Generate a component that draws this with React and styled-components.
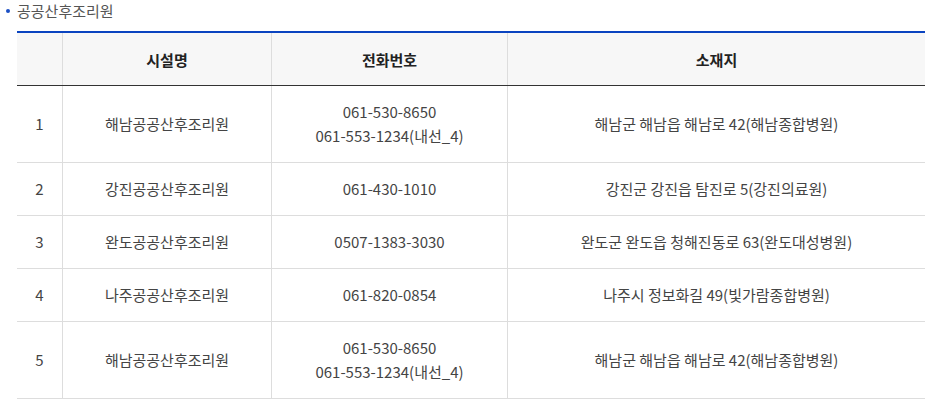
import React from 'react';
import styled, { createGlobalStyle } from 'styled-components';

const GlobalStyle = createGlobalStyle`
  body {
    margin: 0;
    background: #fff;
    font-family: "Noto Sans CJK KR", "Noto Sans", sans-serif;
    color: #333;
  }
`

const Wrapper = styled.div`
  padding: 0 9px 0 17px;
`

const Title = styled.h4`
  position: relative;
  margin: 0 0 9px;
  font-size: 15px;
  font-weight: 400;
  line-height: 22px;
  color: #555;
  &::before {
    content: '';
    position: absolute;
    left: -11px;
    top: 9px;
    width: 4px;
    height: 4px;
    border-radius: 50%;
    background: #1a4fc4;
  }
`

const Table = styled.table`
  width: 100%;
  table-layout: fixed;
  border-collapse: collapse;
  border-top: 2px solid #0a44c0;
  font-size: 15px;
  text-align: center;
`

const HeadCell = styled.th`
  height: 52px;
  padding: 0;
  background: #f7f7f7;
  font-size: 15px;
  font-weight: 700;
  color: #222;
  border-bottom: 1px solid #333;
  border-left: ${props => props.first ? 'none' : '1px solid #ddd'};
  width: ${props => props.w || 'auto'};
`

const Cell = styled.td`
  padding: 14px 4px;
  line-height: 24px;
  color: #444;
  border-bottom: 1px solid #ddd;
  border-left: ${props => props.first ? 'none' : '1px solid #ddd'};
`

const rows = [
  { no: 1, name: '해남공공산후조리원', tel: ['061-530-8650', '061-553-1234(내선_4)'], addr: '해남군 해남읍 해남로 42(해남종합병원)' },
  { no: 2, name: '강진공공산후조리원', tel: ['061-430-1010'], addr: '강진군 강진읍 탐진로 5(강진의료원)' },
  { no: 3, name: '완도공공산후조리원', tel: ['0507-1383-3030'], addr: '완도군 완도읍 청해진동로 63(완도대성병원)' },
  { no: 4, name: '나주공공산후조리원', tel: ['061-820-0854'], addr: '나주시 정보화길 49(빛가람종합병원)' },
  { no: 5, name: '해남공공산후조리원', tel: ['061-530-8650', '061-553-1234(내선_4)'], addr: '해남군 해남읍 해남로 42(해남종합병원)' },
]

const App = () => (
  <Wrapper>
    <GlobalStyle />
    <Title>공공산후조리원</Title>
    <Table>
      <thead>
        <tr>
          <HeadCell first w="45px"></HeadCell>
          <HeadCell w="208px">시설명</HeadCell>
          <HeadCell w="235px">전화번호</HeadCell>
          <HeadCell>소재지</HeadCell>
        </tr>
      </thead>
      <tbody>
        {rows.map(r => (
          <tr key={r.no}>
            <Cell first>{r.no}</Cell>
            <Cell>{r.name}</Cell>
            <Cell>
              {r.tel.map(t => <div key={t}>{t}</div>)}
            </Cell>
            <Cell>{r.addr}</Cell>
          </tr>
        ))}
      </tbody>
    </Table>
  </Wrapper>
);

export default App;
